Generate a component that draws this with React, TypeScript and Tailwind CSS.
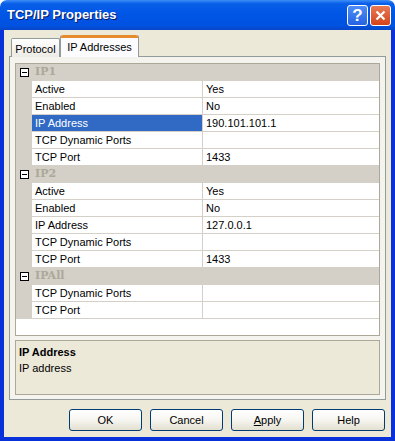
import React from 'react';

type Row = { name: string; value: string; selected?: boolean };
type Category = { title: string; rows: Row[] };

const categories: Category[] = [
  {
    title: 'IP1',
    rows: [
      { name: 'Active', value: 'Yes' },
      { name: 'Enabled', value: 'No' },
      { name: 'IP Address', value: '190.101.101.1', selected: true },
      { name: 'TCP Dynamic Ports', value: '' },
      { name: 'TCP Port', value: '1433' },
    ],
  },
  {
    title: 'IP2',
    rows: [
      { name: 'Active', value: 'Yes' },
      { name: 'Enabled', value: 'No' },
      { name: 'IP Address', value: '127.0.0.1' },
      { name: 'TCP Dynamic Ports', value: '' },
      { name: 'TCP Port', value: '1433' },
    ],
  },
  {
    title: 'IPAll',
    rows: [
      { name: 'TCP Dynamic Ports', value: '' },
      { name: 'TCP Port', value: '' },
    ],
  },
];

const MinusBox = () => (
  <div className="flex h-[9px] w-[9px] items-center justify-center border border-black bg-white">
    <div className="h-px w-[5px] bg-black" />
  </div>
);

const XpButton: React.FC<{ children: React.ReactNode }> = ({ children }) => (
  <button className="flex h-[22px] w-[73px] items-center justify-center rounded-[3px] border border-[#003c74] bg-[linear-gradient(to_bottom,#ffffff_0%,#f6f5f0_50%,#e3e0d0_100%)] text-[11px] text-black">
    {children}
  </button>
);

const App: React.FC = () => {
  return (
    <div className="h-[441px] w-[395px] bg-white font-['Liberation_Sans',Arial,sans-serif] text-[11px] text-black">
      <div className="flex h-full w-full flex-col">
        {/* title bar */}
        <div className="flex h-[30px] items-center justify-between rounded-t-[7px] bg-[linear-gradient(to_bottom,#3d8ef8_0%,#0a5fe8_12%,#0056e6_45%,#0052e0_85%,#0846c6_100%)] pl-[7px] pr-[4px]">
          <span className="text-[13px] font-bold text-white [text-shadow:1px_1px_0_#0a1a6a]">
            TCP/IP Properties
          </span>
          <div className="flex gap-[2px] pt-px">
            <div className="flex h-[21px] w-[21px] items-center justify-center rounded-[3px] border border-white bg-[linear-gradient(to_bottom,#4f8df7,#2563e3)] text-[17px] font-bold leading-none text-white">
              ?
            </div>
            <div className="flex h-[21px] w-[21px] items-center justify-center rounded-[3px] border border-white bg-[linear-gradient(to_bottom,#e87a55,#d6431a)]">
              <svg width="11" height="11" viewBox="0 0 11 11">
                <path d="M1.5 1.5 L9.5 9.5 M9.5 1.5 L1.5 9.5" stroke="white" strokeWidth="2.2" />
              </svg>
            </div>
          </div>
        </div>

        {/* client */}
        <div className="flex flex-1 flex-col border-x-4 border-b-4 border-[#0831d9] bg-[#ece9d8] px-[5px] pt-[5px]">
          {/* tabs */}
          <div className="relative z-10 flex h-[21px] items-end pl-[2px]">
            <div className="mb-[-1px] flex h-[19px] w-[49px] items-center justify-center rounded-t-[2px] border border-b-0 border-[#919b9c] bg-[linear-gradient(to_bottom,#ffffff,#ecebe5)] pt-[2px]">
              Protocol
            </div>
            <div className="mb-[-1px] flex h-[22px] w-[79px] flex-col rounded-t-[2px] border-x border-[#919b9c] bg-[#fcfcfe]">
              <div className="h-[3px] rounded-t-[2px] bg-[#e68b2c]" />
              <div className="flex flex-1 items-center justify-center">IP Addresses</div>
            </div>
          </div>

          {/* tab page */}
          <div className="flex h-[344px] flex-col gap-[4px] border border-[#919b9c] bg-[#f4f3ee] px-[5px] pb-[4px] pt-[6px]">
            {/* property grid */}
            <div className="flex h-[273px] flex-col border border-[#aca899] bg-white">
              {categories.map((cat) => (
                <React.Fragment key={cat.title}>
                  <div className="flex h-[17px] items-center bg-[#d4d0c8]">
                    <div className="flex w-[16px] justify-center">
                      <MinusBox />
                    </div>
                    <span className="pl-[3px] font-['DejaVu_Serif',serif] text-[11px] font-bold text-[#aca899]">
                      {cat.title}
                    </span>
                  </div>
                  {cat.rows.map((row, i) => (
                    <div key={cat.title + i} className="flex h-[17px]">
                      <div className="w-[16px] bg-[#d4d0c8]" />
                      <div
                        className={`flex w-[171px] items-center border-b border-r border-[#d4d0c8] pl-[3px] ${
                          row.selected ? 'bg-[#316ac5] text-white' : ''
                        }`}
                      >
                        {row.name}
                      </div>
                      <div className="flex flex-1 items-center border-b border-[#d4d0c8] pl-[3px]">
                        {row.value}
                      </div>
                    </div>
                  ))}
                </React.Fragment>
              ))}
            </div>

            {/* description */}
            <div className="flex h-[55px] flex-col border border-[#aca899] bg-[#ece9d8] px-[3px] pt-[3px]">
              <span className="text-[11px] font-bold leading-[17px]">IP Address</span>
              <span className="leading-[15px]">IP address</span>
            </div>
          </div>

          {/* buttons */}
          <div className="flex justify-end gap-[8px] pr-px pt-[9px]">
            <XpButton>OK</XpButton>
            <XpButton>Cancel</XpButton>
            <XpButton>
              <span>
                <span className="underline">A</span>pply
              </span>
            </XpButton>
            <XpButton>Help</XpButton>
          </div>
        </div>
      </div>
    </div>
  );
};

export default App;
